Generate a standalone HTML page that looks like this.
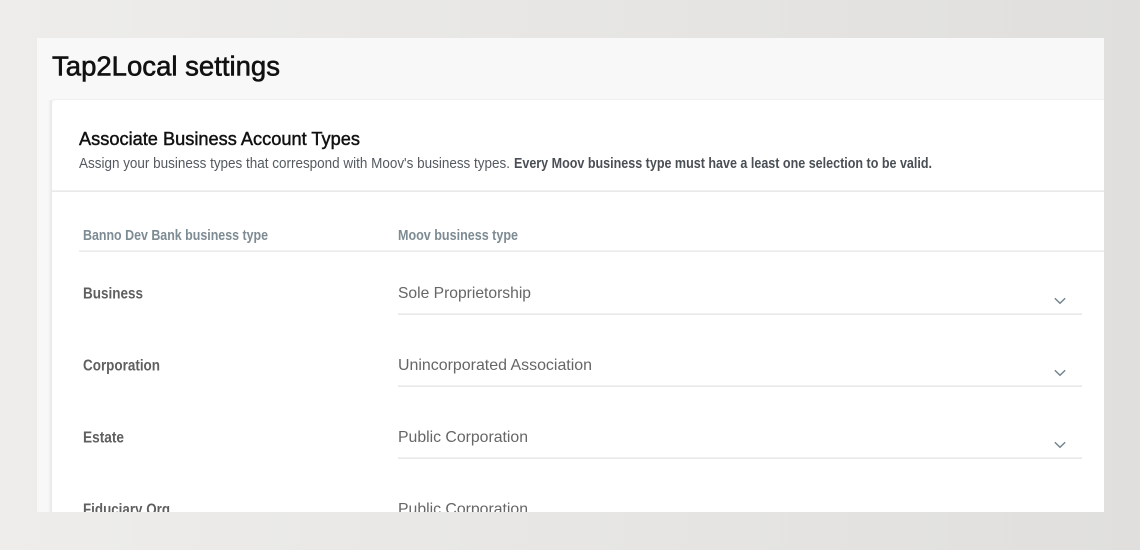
<!DOCTYPE html>
<html><head><meta charset="utf-8"><style>
html,body{margin:0;padding:0;width:1140px;height:550px;overflow:hidden}
svg{display:block}
text{font-family:"Liberation Sans",sans-serif}
</style></head><body>
<svg width="1140" height="550" viewBox="0 0 1140 550" xmlns="http://www.w3.org/2000/svg">
<defs>
<linearGradient id="bg" x1="0" y1="0" x2="1" y2="0"><stop offset="0" stop-color="#eeedeb"/><stop offset="1" stop-color="#e0dfdd"/></linearGradient>
<clipPath id="win"><rect x="37" y="38" width="1067" height="474"/></clipPath>
<linearGradient id="sh" x1="0" y1="0" x2="1" y2="0"><stop offset="0" stop-color="#000" stop-opacity="0"/><stop offset="1" stop-color="#000" stop-opacity=".07"/></linearGradient>
</defs>
<rect width="1140" height="550" fill="url(#bg)"/>
<g clip-path="url(#win)">
<rect x="37" y="38" width="1067" height="474" fill="#f8f8f8"/>
<rect x="48" y="100" width="4" height="412" fill="url(#sh)"/>
<rect x="52" y="99" width="1060" height="1" fill="#efefef"/>
<rect x="52" y="100" width="1070" height="430" rx="6" fill="#fff"/>
<text x="52" y="75.5" font-size="28" fill="#111" stroke="#111" stroke-width=".6" textLength="228" lengthAdjust="spacingAndGlyphs">Tap2Local settings</text>
<text x="79" y="145" font-size="18.5" fill="#111" stroke="#111" stroke-width=".45" textLength="281" lengthAdjust="spacingAndGlyphs">Associate Business Account Types</text>
<text x="79" y="168" font-size="14.5" fill="#555a60" textLength="431" lengthAdjust="spacingAndGlyphs">Assign your business types that correspond with Moov's business types.</text>
<text x="514" y="168" font-size="14.5" font-weight="bold" fill="#4a4f55" textLength="418" lengthAdjust="spacingAndGlyphs">Every Moov business type must have a least one selection to be valid.</text>
<rect x="52" y="190.5" width="1052" height="1.2" fill="#e2e2e2"/>
<text x="83" y="240" font-size="14.5" font-weight="bold" fill="#7d8b93" textLength="185" lengthAdjust="spacingAndGlyphs">Banno Dev Bank business type</text>
<text x="398" y="240" font-size="14.5" font-weight="bold" fill="#7d8b93" textLength="120" lengthAdjust="spacingAndGlyphs">Moov business type</text>
<rect x="79" y="250.5" width="1025" height="1.2" fill="#e4e4e4"/>

<text x="83" y="298.5" font-size="15.5" font-weight="bold" fill="#5f5f5f" textLength="60" lengthAdjust="spacingAndGlyphs">Business</text>
<text x="398" y="298" font-size="16" fill="#666" textLength="133" lengthAdjust="spacingAndGlyphs">Sole Proprietorship</text>
<rect x="398" y="313.5" width="684" height="1.2" fill="#e0e0e2"/>
<path d="M1054.8 298.3l5.2 5 5.2-5" fill="none" stroke="#71828c" stroke-width="1.4"/>

<text x="83" y="370.5" font-size="15.5" font-weight="bold" fill="#5f5f5f" textLength="77" lengthAdjust="spacingAndGlyphs">Corporation</text>
<text x="398" y="370" font-size="16" fill="#666" textLength="194" lengthAdjust="spacingAndGlyphs">Unincorporated Association</text>
<rect x="398" y="385.5" width="684" height="1.2" fill="#e0e0e2"/>
<path d="M1054.8 370.3l5.2 5 5.2-5" fill="none" stroke="#71828c" stroke-width="1.4"/>

<text x="83" y="442.5" font-size="15.5" font-weight="bold" fill="#5f5f5f" textLength="41" lengthAdjust="spacingAndGlyphs">Estate</text>
<text x="398" y="442" font-size="16" fill="#666" textLength="130" lengthAdjust="spacingAndGlyphs">Public Corporation</text>
<rect x="398" y="457.5" width="684" height="1.2" fill="#e0e0e2"/>
<path d="M1054.8 442.3l5.2 5 5.2-5" fill="none" stroke="#71828c" stroke-width="1.4"/>

<text x="83" y="514.5" font-size="15.5" font-weight="bold" fill="#5f5f5f" textLength="87" lengthAdjust="spacingAndGlyphs">Fiduciary Org</text>
<text x="398" y="514" font-size="16" fill="#666" textLength="130" lengthAdjust="spacingAndGlyphs">Public Corporation</text>
</g>
</svg>
</body></html>
